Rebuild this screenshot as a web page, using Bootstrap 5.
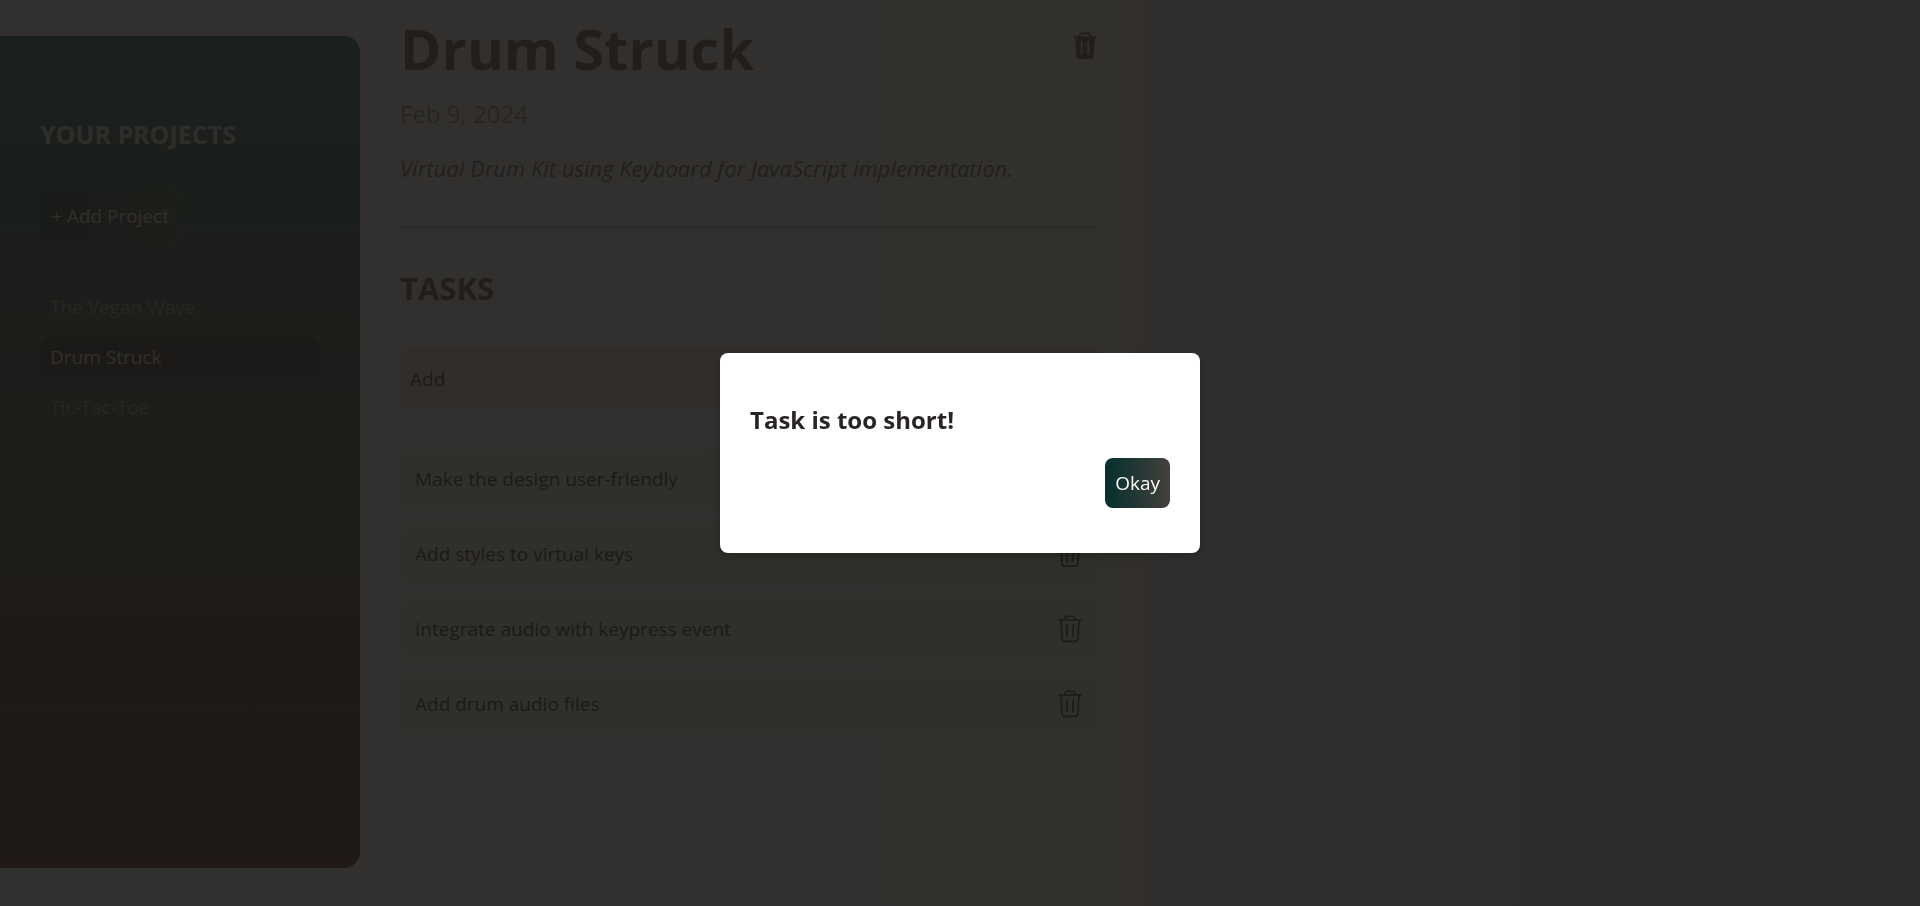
<!DOCTYPE html>
<html lang="en">
<head>
<meta charset="utf-8">
<meta name="viewport" content="width=device-width, initial-scale=1">
<title>Drum Struck</title>
<link rel="stylesheet" href="https://cdn.jsdelivr.net/npm/bootstrap@5.3.0/dist/css/bootstrap.min.css">
<style>
html { font-size: 20px; }
body {
  min-height: 100vh;
  font-family: "Segoe UI", "Open Sans", "Noto Sans", sans-serif;
  font-size: 19px; line-height: 30px; color: #1c1917;
  background: linear-gradient(to right, #fff 0%, #faf9f5 57%, #e2e6ee 72%, #d2dcea 86%, #b4d4fa 100%);
  overflow: hidden;
}
.app-shell { gap: 40px; padding-top: 36px; }
.side-panel {
  width: 360px; height: calc(100vh - 74px); padding: 78px 40px;
  border-radius: 0 16px 16px 0;
  background: linear-gradient(to bottom, #115e59, #451a03);
}
.side-title { font-size: 25px; line-height: 40px; font-weight: 700; color: #e7d8d0; margin-bottom: 37px; }
.grad-btn {
  border: 0; border-radius: 8px; padding: 10px; height: 50px; line-height: 30px; white-space: nowrap;
  font-size: 19px; color: #fafaf9;
  background: linear-gradient(to right, #042f2e, #44403c);
}
.side-panel .grad-btn { color: #e7e5e4; padding: 10px 11px; }
.project-list { margin-top: 46px; gap: 10px; }
.project-link {
  display: block; width: 100%; text-align: left; border: 0; background: none; border-radius: 10px;
  padding: 5px 10px; font-size: 19px; color: #9c948c;
}
.project-link.current { background: #262626; color: #e7e5e4; }
.work-area { width: 700px; }
.work-title { font-size: 56px; line-height: 60px; font-weight: 700; color: #57463c; }
.icon-btn { border: 0; background: none; padding: 0; line-height: 0; color: #57463c; }
.work-head .icon-btn { padding-bottom: 4px; }
.work-date { font-size: 24px; line-height: 40px; color: #8c857c; margin: 16px 0 14px; }
.work-note { font-size: 22px; line-height: 40px; font-style: italic; color: #57534e; }
.work-head { border-bottom: 2px solid #d6d3d1; padding-bottom: 38px; margin-bottom: 38px; margin-top: -18px; }
.tasks-title { font-size: 31px; line-height: 45px; font-weight: 700; color: #4a3c32; margin-bottom: 37px; }
.task-field { display: block; border: 0; border-radius: 8px; height: 58px; padding: 4px 10px 0; font-size: 19px; background: #f4dcd0; color: #1c1917; }
.task-field::placeholder { color: #1c1917; opacity: 1; }
.task-list { gap: 15px; margin-top: 43px; }
.task-row { border-radius: 8px; height: 60px; padding: 0 15px; background: #e2eeea; }
.task-row .icon-btn { color: #292524; }
.shade { background: #1c1917; --bs-backdrop-opacity: .9; }
.notice { max-width: 480px; }
.notice-box { border: 0; border-radius: 8px; padding: 47px 30px 45px; height: 200px; box-shadow: 0 4px 8px rgba(0,0,0,.25); }
.notice-title { font-size: 24px; line-height: 40px; font-weight: 700; color: #292524; margin-bottom: 18px; }
</style>
</head>
<body>
<svg class="d-none" xmlns="http://www.w3.org/2000/svg">
  <symbol id="bin" viewBox="2 3 20 20">
    <path d="M4.800 7h14.400M6 7l.7 12.300q.1 1.900 2 1.900h6.600q1.900 0 2-1.900L18 7M8.400 7l.4-1.500q.3-1 1.400-1h3.600q1.100 0 1.400 1l.4 1.500M9.800 10.200l.2 7.800M14.200 10.200l-.2 7.800" fill="none" stroke="currentColor" stroke-width="1.100" stroke-linecap="round" stroke-linejoin="round"/>
  </symbol>
  <symbol id="bin-full" viewBox="2 3 20 20">
    <path d="M4.800 7.200h14.400M8.300 7l.4-1.500q.3-1 1.400-1h3.800q1.100 0 1.400 1l.4 1.500" fill="none" stroke="currentColor" stroke-width="1.300" stroke-linecap="round" stroke-linejoin="round"/>
    <path d="M5.400 7.200h13.200l-.8 12.300q-.1 2.200-2.300 2.200h-7q-2.200 0-2.300-2.200zM9.200 10v8.200q.6.600 1.200 0V10q-.6-.6-1.200 0zM13.600 10v8.200q.6.600 1.200 0V10q-.6-.6-1.200 0z" fill="currentColor" fill-rule="evenodd"/>
  </symbol>
</svg>
<div class="app-shell d-flex align-items-start">
  <aside class="side-panel flex-shrink-0">
    <h2 class="side-title">YOUR PROJECTS</h2>
    <button type="button" class="grad-btn">+ Add Project</button>
    <ul class="project-list list-unstyled d-grid mb-0">
      <li><button type="button" class="project-link">The Vegan Wave</button></li>
      <li><button type="button" class="project-link current">Drum Struck</button></li>
      <li><button type="button" class="project-link">Tic-Tac-Toe</button></li>
    </ul>
  </aside>
  <main class="work-area">
    <header class="work-head">
      <div class="d-flex justify-content-between align-items-center">
        <h1 class="work-title mb-0">Drum Struck</h1>
        <button type="button" class="icon-btn" aria-label="Delete project"><svg width="30" height="30"><use href="#bin-full"/></svg></button>
      </div>
      <p class="work-date">Feb 9, 2024</p>
      <p class="work-note mb-0">Virtual Drum Kit using Keyboard for JavaScript implementation.</p>
    </header>
    <h2 class="tasks-title">TASKS</h2>
    <input class="task-field w-100" type="text" placeholder="Add" aria-label="Add task">
    <ul class="task-list list-unstyled d-grid mb-0">
      <li class="task-row d-flex align-items-center justify-content-between"><span>Make the design user-friendly</span><button type="button" class="icon-btn" aria-label="Delete task"><svg width="30" height="30"><use href="#bin"/></svg></button></li>
      <li class="task-row d-flex align-items-center justify-content-between"><span>Add styles to virtual keys</span><button type="button" class="icon-btn" aria-label="Delete task"><svg width="30" height="30"><use href="#bin"/></svg></button></li>
      <li class="task-row d-flex align-items-center justify-content-between"><span>Integrate audio with keypress event</span><button type="button" class="icon-btn" aria-label="Delete task"><svg width="30" height="30"><use href="#bin"/></svg></button></li>
      <li class="task-row d-flex align-items-center justify-content-between"><span>Add drum audio files</span><button type="button" class="icon-btn" aria-label="Delete task"><svg width="30" height="30"><use href="#bin"/></svg></button></li>
    </ul>
  </main>
</div>
<div class="modal-backdrop shade show"></div>
<div class="modal show d-block" tabindex="-1" role="dialog" aria-modal="true" aria-labelledby="noticeTitle">
  <div class="modal-dialog modal-dialog-centered notice">
    <form class="modal-content notice-box" method="dialog">
      <h2 id="noticeTitle" class="notice-title">Task is too short!</h2>
      <button class="grad-btn ms-auto">Okay</button>
    </form>
  </div>
</div>
<script src="https://cdn.jsdelivr.net/npm/bootstrap@5.3.0/dist/js/bootstrap.bundle.min.js"></script>
</body>
</html>
